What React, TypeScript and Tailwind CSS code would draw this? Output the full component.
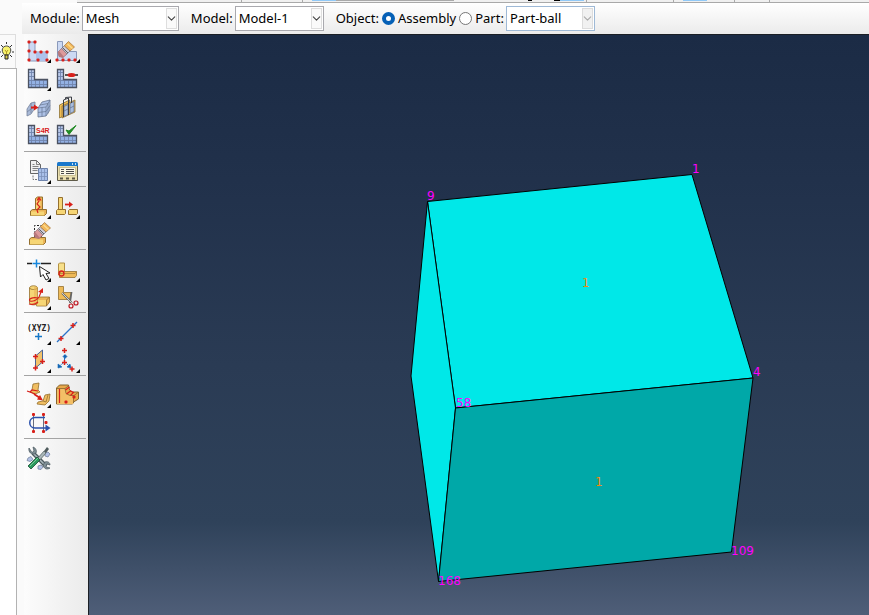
import type { ReactNode } from "react";
import { ChevronDown } from "lucide-react";

const TAN = "#f6d676";
const TAN_MID = "#eab456";
const TAN_DARK = "#94702f";
const RED = "#d8201a";
const BLUE = "#2a72c8";

function Icon({ children, more = false }: { children: ReactNode; more?: boolean }) {
    return (
        <svg width="28" height="28" viewBox="0 0 28 28" fill="none" aria-hidden="true">
            {children}
            {more && <path d="M23 26h4v-4z" fill="#000" />}
        </svg>
    );
}

function Dots({ at }: { at: number[][] }) {
    return (
        <>
            {at.map(([x, y]) => (
                <rect key={`${x}-${y}`} x={x - 1.5} y={y - 1.5} width="3" height="3" rx="1" fill={RED} />
            ))}
        </>
    );
}

function Plus({ x, y, r = 3, color = RED }: { x: number; y: number; r?: number; color?: string }) {
    return <path d={`M${x - r} ${y}h${r * 2}M${x} ${y - r}v${r * 2}`} stroke={color} strokeWidth="1.5" />;
}

function MeshL() {
    return (
        <>
            <path d="M4.5 4.5h6v10h13v8h-19z" fill="#b9c9ea" />
            <path d="M4.500 14.500h19v8h-19z" fill="#93b1e4" />
            <path
                d="M7.500 5v17M5 7.500h5M5 11.500h5M5 15.500h18M5 19.500h18M11.500 15v7M15.500 15v7M19.500 15v7"
                stroke="#7185ad"
                strokeWidth=".9"
            />
            <path d="M4.5 4.5h6v10h13v8h-19z" stroke="#4b5261" strokeWidth="1.3" />
        </>
    );
}

function Eraser() {
    return (
        <>
            <path d="m8.700 11.300 5.300 5.700-4 3.500-4-1-1-4.500z" fill="#dd9a9c" stroke="#9a6a70" strokeWidth=".7" />
            <path d="m5 15 1-1 5 6-1 .500-4-1z" fill="#b8787c" />
            <path d="m11.300 8.700 5.700 5.300-3 3-5.300-5.700z" fill="#cfcdd6" stroke="#77757e" strokeWidth=".7" />
            <path d="m9.500 10.500 5.500 5.500" stroke="#5f5d68" />
            <path d="M15.500 4.500l6 5.500-4.500 4-5.700-5.300z" fill="#f2b75a" stroke="#a4743a" strokeWidth=".7" />
            <path d="m14.500 7 5 4.500" stroke="#fbdc8c" strokeWidth="1.500" />
        </>
    );
}

function SeedPart() {
    return (
        <Icon more>
            <path d="M5 5h6v10h12v9H5z" fill="#ccd9f3" stroke="#8a99ba" />
            <path d="M12 15.5h11V24H12z" fill="#adc3ec" />
            <Dots at={[[5, 5], [11, 5], [5, 14], [11, 15], [17, 15], [23, 15], [5, 23], [14, 23], [23, 23]]} />
        </Icon>
    );
}

function DeleteSeeds() {
    return (
        <Icon more>
            <path d="M4.5 4.5h5v10h14v9h-19z" fill="#ccd9f3" stroke="#8a99ba" />
            <Eraser />
            <Dots at={[[4, 23], [10, 23], [16, 23], [22, 23]]} />
        </Icon>
    );
}

function MeshPart() {
    return (
        <Icon more>
            <MeshL />
        </Icon>
    );
}

function MeshRegion() {
    return (
        <Icon>
            <MeshL />
            <path d="M12 10h13" stroke="#222" strokeWidth="1.5" />
            <ellipse cx="18.500" cy="10" rx="4" ry="2" fill={RED} />
        </Icon>
    );
}

function AssociateMesh() {
    return (
        <Icon>
            <path d="m3 16 4-6 4-1v6l-4 6-4 2z" fill="#a9bad8" stroke="#76839c" strokeWidth=".8" />
            <path d="M7 10v10M3 19l8-6" stroke="#76839c" strokeWidth=".8" />
            <path d="m14 15 4-6 8-2v10l-4 6-8 1z" fill="#adc1e6" stroke="#66758f" strokeWidth=".8" />
            <path
                d="m14 15 8-1 4-7M22 14v9M18 14.500v9M14 19.500l8-1 4-6M16 12l8-1.500v10"
                stroke="#66758f"
                strokeWidth=".7"
            />
            <path d="M7 14.500h4" stroke={RED} strokeWidth="2" />
            <path d="m10 11.500 4.500 3-4.500 3z" fill={RED} />
        </Icon>
    );
}

function MeshStack() {
    return (
        <Icon>
            <path d="m6.500 12 10-5v13l-10 5z" fill="#f0bd56" stroke="#8f7336" strokeWidth=".8" />
            <path d="m9 13 13-6v12L9 25z" fill="#e9b04d" stroke="#8f7336" strokeWidth=".8" />
            <path d="m11 13.500 4-2v10l-4 2zM17 10.500l4-2v10l-4 2z" fill="#a9bddd" stroke="#66758f" strokeWidth=".8" />
            <path d="m11 18 4-2M17 15l4-2" stroke="#66758f" strokeWidth=".8" />
            <path d="M10.500 24V7l5-2v17M12.500 6V4.500l6-.500v6" stroke="#3a3d44" />
        </Icon>
    );
}

function ElementType() {
    return (
        <Icon>
            <MeshL />
            <text x="12" y="12" fill={RED} fontSize="7" fontWeight="700" fontFamily="Liberation Sans, sans-serif">
                S4R
            </text>
        </Icon>
    );
}

function VerifyMesh() {
    return (
        <Icon>
            <MeshL />
            <path d="m13 9 3 4.500 7-9-7 5.500z" fill="#208a25" stroke="#208a25" />
        </Icon>
    );
}

function CreateAttachment() {
    return (
        <Icon more>
            <path d="M6.500 2.500h6l4 4v9h-10z" fill="#f1f1f1" stroke="#666" />
            <path d="M12.500 2.500v4h4M8.500 6.500h2M8.500 8.500h6M8.500 10.500h6M8.500 12.500h5" stroke="#666" strokeWidth=".8" />
            <path d="M9 17.500v4h4" stroke="#777" strokeDasharray="2 1" />
            <path d="M14.500 10.500h9v12h-9z" fill="#a9c0ea" stroke="#6d82aa" />
            <path d="M17.500 10.500v12M20.500 10.500v12M14.500 14.500h9M14.500 18.500h9" stroke="#7d92ba" strokeWidth=".8" />
        </Icon>
    );
}

function Manager() {
    return (
        <Icon>
            <path d="M4.500 6.500h20v16h-20z" fill="#eadfae" stroke="#5e5a48" />
            <path d="M4 5.500Q4 4 5.500 4h18Q25 4 25 5.500V8H4z" fill="#1a78cc" />
            <path d="M19 6h1M22 6h1" stroke="#fff" strokeWidth="1.500" />
            <path d="M6.500 9.500h16v8h-16z" fill="#fbf8e8" stroke="#b5aa7c" strokeWidth=".7" />
            <path d="M8 11.500h3M8 13.500h3M8 15.500h3M13 11.500h8M13 13.500h8M13 15.500h8" stroke="#4c4c4c" />
            <path d="M7 20.500h3M13 20.500h3M19 20.500h3" stroke="#5e5a48" strokeWidth="2" />
        </Icon>
    );
}

function BottomUpMesh() {
    return (
        <Icon more>
            <path d="m11.500 5.500 2-1.500h5v13h-7z" fill={TAN_MID} stroke={TAN_DARK} />
            <path d="M12 6h4.500v11H12z" fill={TAN} />
            <path d="m6.500 18 2-1.500h14v4l-2 2h-14z" fill={TAN_MID} stroke={TAN_DARK} />
            <path d="M7 18.500h13v4H7z" fill={TAN} />
            <path d="m14 20-1-3 3-3-3-3 2-3V6M13 7.500l2-3 2 3" stroke={RED} strokeWidth="1.2" />
        </Icon>
    );
}

function SplitPart() {
    return (
        <Icon more>
            <path d="M5.500 4.500h4v12h-4z" fill={TAN} stroke={TAN_DARK} />
            <path d="m3.500 17.500 1-1h8v4l-1 1h-8zM15.500 17.500l1-1h8v4l-1 1h-8z" fill={TAN} stroke={TAN_DARK} />
            <path d="M12 11.500h5" stroke={RED} strokeWidth="1.800" />
            <path d="m16 8.500 4 3-4 3z" fill={RED} />
        </Icon>
    );
}

function DeleteMesh() {
    return (
        <Icon>
            <path d="M10.500 16V4.500h7v12" stroke="#222" strokeDasharray="2 1.500" />
            <path d="m5.500 18 2-1.500h14v5l-2 2h-14z" fill={TAN_MID} stroke={TAN_DARK} />
            <path d="M6 18.500h13v5H6z" fill={TAN} />
            <g transform="translate(5 -3)">
                <Eraser />
            </g>
        </Icon>
    );
}

function EditMesh() {
    return (
        <Icon more>
            <path d="M3 7.500h5M17 7.500h10" stroke="#222" strokeWidth="1.500" />
            <Plus x={12.5} y={7.5} r={4} color="#1686dc" />
            <path d="M15.500 10.500 16.500 21l2.500-2.500 3 5.500 3-1.500-3-5 4-.500z" fill="#fff" stroke="#222" />
        </Icon>
    );
}

function PartitionCorner() {
    return (
        <Icon more>
            <path d="m5.500 8 1-1h5v12h-6z" fill="#f8e08a" stroke="#b39245" />
            <path d="m6.500 17 2-1.500h15v4l-1.500 2h-15.500z" fill="#efb956" stroke={TAN_DARK} strokeWidth=".8" />
            <path d="M7 17.500h15l1.500-2" stroke={TAN_DARK} strokeWidth=".6" />
            <circle cx="8.500" cy="17.500" r="2.500" stroke={RED} strokeWidth="1.300" />
        </Icon>
    );
}

function MergeGeometry() {
    return (
        <Icon more>
            <path d="m12.500 15 3-2h10v5l-3 4h-10z" fill={TAN_MID} stroke={TAN_DARK} strokeWidth=".8" />
            <path d="M12.500 16h10v5.500h-10z" fill={TAN} />
            <path d="M22.500 22v-6l3-3" stroke={TAN_DARK} strokeWidth=".8" />
            <path d="M5.500 4c0-3 8-3 8 0v15c0 2.500-8 2.500-8 0z" fill={TAN} stroke={TAN_DARK} strokeWidth=".8" />
            <path d="M5.500 4c1 2 7 2 8 0" stroke={TAN_DARK} strokeWidth=".8" />
            <path d="M10 3h3.500v17H10z" fill={TAN_MID} fillOpacity=".6" />
            <path d="M5 20c4 1 7 0 9-2M14 14c-6-1-10 1-8 3 3 1 7-1 9-4l2-5" stroke={RED} strokeWidth="1.200" />
            <path d="m14 8 5-4v5z" fill={RED} />
        </Icon>
    );
}

function CutGeometry() {
    return (
        <Icon>
            <path d="M5.500 2.500h5v6h8l-2 7h-11z" fill="#eebb58" stroke={TAN_DARK} strokeWidth=".8" />
            <path d="m9 9 10 10M18.500 8 17 19" stroke="#666" strokeWidth="1.800" />
            <path d="m9 9 10 10" stroke="#eee" strokeWidth=".800" />
            <circle cx="18" cy="22" r="2" stroke="#bd1620" strokeWidth="1.200" />
            <circle cx="23" cy="19" r="2" stroke="#bd1620" strokeWidth="1.200" />
        </Icon>
    );
}

function DatumPoint() {
    return (
        <Icon more>
            <text x="3" y="12" fill="#222" fontSize="8" fontWeight="700" fontFamily="DejaVu Sans Mono, monospace">
                (XYZ)
            </text>
            <Plus x={14.5} y={17.5} r={3.5} color="#1678c8" />
        </Icon>
    );
}

function DatumAxis() {
    return (
        <Icon more>
            <path d="M4 23 24 3" stroke={BLUE} strokeWidth="1.3" />
            <Plus x={8} y={19.5} r={2.5} />
            <Plus x={20} y={6.5} r={2.5} />
        </Icon>
    );
}

function DatumPlane() {
    return (
        <Icon more>
            <path d="m11.500 9 7-6v12l-7 6z" fill="#f3c26a" stroke="#4a6496" />
            <Plus x={11.5} y={9.5} r={2.5} />
            <Plus x={18.5} y={14.5} r={2.5} />
            <Plus x={11.5} y={21} r={2.5} />
        </Icon>
    );
}

function DatumCsys() {
    return (
        <Icon more>
            <path d="M11.500 8v7l-5 4M11.500 15l5 4" stroke={BLUE} strokeDasharray="2 1" />
            <path d="m10 9.500 2-2 2 2-2 2zM5 17l4 3-4 1zM14 20l3-3 1 4z" fill="#1267b5" stroke="#1267b5" strokeWidth=".6" />
            <Plus x={11.5} y={3.5} r={2.5} />
            <Plus x={11.5} y={15.5} r={2.5} />
            <Plus x={19} y={22} r={2.5} />
        </Icon>
    );
}

function CopyMesh() {
    return (
        <Icon more>
            <path d="m9 2 6-1-1 7 2 2-5 2-5-2 2-2z" fill="#f0be62" stroke={TAN_DARK} strokeWidth=".8" />
            <path d="m3 9 3 1 2-2 6 1M6 10l5 2" stroke={RED} strokeWidth="1.200" />
            <path d="m10 12 6 4" stroke={RED} strokeWidth="1.800" />
            <path d="m16 13 3 5.500-6-1z" fill={RED} />
            <path d="m21 13 5-1-1 7-4 4-8-1 1-2 5-1z" fill="#f0be62" stroke={TAN_DARK} strokeWidth=".8" />
            <path d="m19 19 3 1 2-7" stroke={TAN_DARK} strokeWidth=".8" />
        </Icon>
    );
}

function VirtualTopology() {
    return (
        <Icon>
            <path d="m3.500 6 3-3h9l1 5 3 2h6v7l-5 3-1 2h-16z" fill="#e9a94a" stroke="#87652e" />
            <path d="M4 6.500h8l1 5 3 2h4V22H4z" fill="#f3bf66" />
            <path d="M4 6.500h8l4-3M12 6.500l1 5 4 2h4l4-3M20.500 14v7" stroke="#87652e" strokeWidth=".8" />
            <path d="M6.500 7v14M12.500 8l4-3M13.500 12l4-3 3 1.500-3 3" stroke={RED} strokeWidth="1.200" />
            <Dots at={[[13, 20], [21, 15]]} />
        </Icon>
    );
}

function EditAttributes() {
    return (
        <Icon>
            <path d="M9.500 6v16M19.500 6v16" stroke="#666d80" />
            <path d="M21 7.500H11c-7 0-7 10.500 0 10.500h13" stroke="#2b52ad" strokeWidth="1.500" />
            <path d="m21.500 14.500 5 3.500-5 3.500z" fill="#2b52ad" />
            <Dots at={[[9.5, 4.5], [19.5, 4.5], [22, 12.5], [9.5, 21.5], [19.5, 21.5]]} />
        </Icon>
    );
}

function Toolset() {
    return (
        <Icon>
            <path
                d="m4 13 3-1.500 2 3-3 2-3-1zM21 8l3-1 2 2-2 3-3-1zM14 21l3-1 2 2-2 2.500-3-.500z"
                fill="#b3c2e6"
                stroke="#76859f"
                strokeWidth=".8"
            />
            <path d="m9 8 13 13" stroke="#4d5a60" strokeWidth="4" />
            <path d="m9 8 12.500 12.500" stroke="#aab8bd" strokeWidth="1.500" />
            <path d="M5 3c-1 4 3 8 7 5 1-2 0-5-3-6l1 4-2 1.500zM19 20c1 4 4 5 7 3l-4-1 1-3 3 1c0-3-3-4-5-3z" fill="#7f8f96" stroke="#48555b" strokeWidth=".7" />
            <path d="m13 14 7-8 2 2-7 8z" fill="#a9b6b8" stroke="#4d5b5b" strokeWidth=".7" />
            <path d="m20 6 3-4 2 2-3 4z" fill="#4e5a5c" />
            <path d="m4 21 9-9 3 3-9 9z" fill="#2a9a5c" stroke="#174e34" strokeWidth=".8" />
            <path d="m6 21 8-8" stroke="#79c99a" />
        </Icon>
    );
}

const toolGroups = [
    [
        ["Seed Part Instance", SeedPart],
        ["Delete Seeds", DeleteSeeds],
        ["Mesh Part Instance", MeshPart],
        ["Mesh Region", MeshRegion],
        ["Associate Mesh", AssociateMesh],
        ["Assign Stack Direction", MeshStack],
        ["Assign Element Type", ElementType],
        ["Verify Mesh", VerifyMesh],
    ],
    [
        ["Create Attachment", CreateAttachment],
        ["Attachment Manager", Manager],
    ],
    [
        ["Create Bottom-Up Mesh", BottomUpMesh],
        ["Split Mesh", SplitPart],
        ["Delete Mesh", DeleteMesh],
    ],
    [
        ["Partition Edge", EditMesh],
        ["Partition Face", PartitionCorner],
        ["Partition Cell", MergeGeometry],
        ["Cut Geometry", CutGeometry],
    ],
    [
        ["Create Datum Point", DatumPoint],
        ["Create Datum Axis", DatumAxis],
        ["Create Datum Plane", DatumPlane],
        ["Create Datum CSYS", DatumCsys],
    ],
    [
        ["Copy Mesh Pattern", CopyMesh],
        ["Virtual Topology", VirtualTopology],
        ["Edit Attributes", EditAttributes],
    ],
    [["Tools", Toolset]],
] as [string, () => ReactNode][][];

function Toolbox() {
    return (
        <nav
            aria-label="Mesh tools"
            className="w-16 shrink-0 bg-gradient-to-r from-[#fcfcfc] to-[#ebebeb] pt-px pr-0.5"
        >
            {toolGroups.map((group, i) => (
                <div
                    key={i}
                    className="grid grid-cols-[28px_28px] gap-x-px border-b border-[#a4a4a4] pt-1.5 first:py-0.5 last:border-0"
                >
                    {group.map(([name, Glyph]) => (
                        <button key={name} type="button" aria-label={name} className="size-7">
                            <Glyph />
                        </button>
                    ))}
                </div>
            ))}
        </nav>
    );
}

function Picker({ id, label, value, size, off }: { id: string; label: string; value: string; size: string; off?: boolean }) {
    return (
        <div className="flex items-center gap-0.5">
            <label htmlFor={id}>{label}</label>
            <div className={`relative h-[25px] ${size}`}>
                <select
                    id={id}
                    defaultValue={value}
                    className={`block size-full appearance-none border bg-white pl-[3px] outline-none ${off ? "border-[#9eb9d6]" : "border-[#a9a9ae]"}`}
                >
                    <option>{value}</option>
                </select>
                <span
                    className={`pointer-events-none absolute inset-y-0.5 right-0.5 flex w-[11px] items-center justify-center border ${off ? "border-[#dcdcdc] bg-[#f1f1f1] text-[#aaa]" : "border-[#dedede] bg-[#fafafa] text-[#444]"}`}
                >
                    <ChevronDown className="size-[13px] shrink-0" strokeWidth={2} />
                </span>
            </div>
        </div>
    );
}

function ContextBar() {
    const radio =
        "size-[13px] appearance-none rounded-full border border-[#777] bg-white checked:border-4 checked:border-[#0560b6]";

    return (
        <header className="ml-[22px] flex h-[31px] items-center gap-3 bg-gradient-to-b from-white to-[#ebebeb] pl-2 whitespace-nowrap">
            <Picker id="module" label="Module:" value="Mesh" size="w-[97px]" />
            <Picker id="model" label="Model:" value="Model-1" size="w-[89px]" />
            <fieldset className="flex items-center gap-[3px]">
                <legend className="float-left">Object:</legend>
                <input id="assembly" name="object" type="radio" defaultChecked className={radio} />
                <label htmlFor="assembly">Assembly</label>
                <input id="part" name="object" type="radio" className={radio} />
                <Picker id="part-name" label="Part:" value="Part-ball" size="w-[89px]" off />
            </fieldset>
        </header>
    );
}

// lower edge of the icon toolbar above the context bar
function ToolbarEdge() {
    return (
        <div className="ml-[77px] flex h-[3px] overflow-hidden border-b border-[#a9a9a9] bg-[#f0f0f0]">
            <span className="ml-[164px] w-px bg-[#a9a9a9]" />
            <span className="ml-[60px] w-px bg-[#a9a9a9]" />
            <span className="ml-[9px] h-px w-6 bg-[#91c9f7]" />
            <span className="h-px w-[118px] bg-[#a9a9a9]" />
            <span className="ml-[74px] h-px w-1 bg-black" />
            <span className="ml-[22px] h-px w-1.5 bg-black" />
            <span className="h-px w-6 bg-[#91c9f7]" />
            <span className="ml-0.5 w-px bg-[#a9a9a9]" />
            <span className="ml-[86px] w-px bg-[#a9a9a9]" />
            <span className="ml-[9px] h-px w-6 bg-[#91c9f7]" />
            <span className="ml-[27px] w-px bg-[#a9a9a9]" />
            <span className="ml-[34px] w-px bg-[#a9a9a9]" />
        </div>
    );
}

function SideTab() {
    return (
        <aside className="mr-[7px] flex w-[17px] shrink-0 flex-col">
            <button
                type="button"
                aria-label="Tips"
                className="mr-px flex h-[34px] items-center overflow-hidden border-t border-r border-[#dedede] bg-[#fafafa]"
            >
                <svg width="15" height="20" viewBox="0 0 15 20" fill="none" className="shrink-0" aria-hidden="true">
                    <path d="M1 3 3 5M12 3l-2 2M0 10h1M12 10h2M1 15l2-2M12 15l-2-2M6.500 0v2" stroke="#333" />
                    <path d="M4.500 13C0 8 3 4 6.500 4s6.500 4 2 9z" fill="#f8f36c" stroke="#444" />
                    <path d="M5 8l1.500 2L8 8M6.500 10v3" stroke="#b69b23" />
                    <path d="M5 13h3v4H5z" fill="#d6c84a" stroke="#222" />
                </svg>
            </button>
            <div className="flex-1 border-t border-r border-[#b2b2b2] bg-white" />
        </aside>
    );
}

function Viewport() {
    return (
        <main className="flex min-w-0 flex-1 border-t border-l border-[#1b1f25] bg-[linear-gradient(#1b2b45_0%,#21314b_25%,#2a3b54_57%,#2f425a_84%,#4f5e78_100%)]">
            <svg viewBox="0 0 780 580" className="w-full self-start" role="img" aria-label="Meshed block">
                <g stroke="#000" strokeLinejoin="round">
                    <path d="M338.500 166.500 603 139.500l61 203.500-297.500 30z" fill="#00e8e8" />
                    <path d="m338.500 166.500 28 206.500-17 173.500L322 341z" fill="#00e8e8" />
                    <path d="M366.500 373 664 343l-21.500 174-293 29.500z" fill="#00a8a8" />
                </g>
                <g fill="#ff00ff" fontFamily="DejaVu Sans, sans-serif" fontSize="12">
                    <text x="338" y="165">9</text>
                    <text x="603" y="138">1</text>
                    <text x="664" y="341">4</text>
                    <text x="367" y="372">58</text>
                    <text x="349" y="550">168</text>
                    <text x="642" y="520">109</text>
                </g>
                <g fill="#f08a10" fontFamily="DejaVu Sans, sans-serif" fontSize="12">
                    <text x="493" y="252">1</text>
                    <text x="506" y="451">1</text>
                </g>
            </svg>
        </main>
    );
}

export default function App() {
    return (
        <div className="flex min-h-screen flex-col bg-[#fafafa] font-['Noto_Sans',sans-serif] text-[13px] text-black">
            <ToolbarEdge />
            <ContextBar />
            <div className="flex flex-1">
                <SideTab />
                <Toolbox />
                <Viewport />
            </div>
        </div>
    );
}
